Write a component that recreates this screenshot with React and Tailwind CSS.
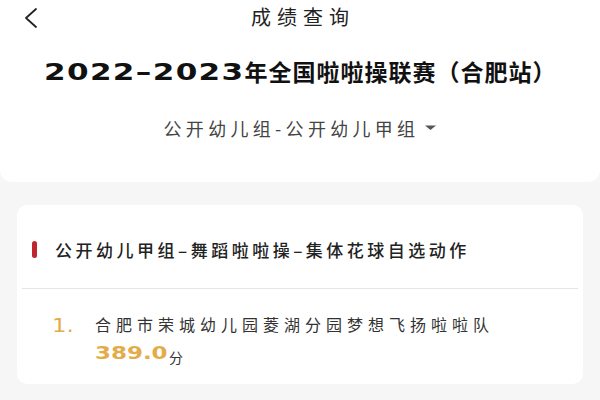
export default function App() {
  const cjk = { fontFamily: '"Noto Sans CJK SC", "Liberation Sans", sans-serif' };
  const num = { fontFamily: '"DejaVu Sans", "Liberation Sans", sans-serif' };

  return (
    <div className="w-[600px] h-[400px] bg-[#f6f6f6] overflow-hidden" style={cjk}>
      {/* Header */}
      <div className="bg-white rounded-b-[12px] h-[182px] flex flex-col">
        <div className="relative h-[36px] flex items-center justify-center">
          <button className="absolute left-[22px] top-[7px]">
            <svg width="18" height="22" viewBox="0 0 18 22" fill="none" stroke="#222" strokeWidth="1.8" strokeLinecap="round" strokeLinejoin="round">
              <path d="M14 2L4 11l10 9" />
            </svg>
          </button>
          <span className="text-[20px] text-[#222] leading-none tracking-[6px] pl-[6px] mt-[-2px]">成绩查询</span>
        </div>
        <div className="mt-[23px] flex justify-center items-center text-[23px] font-bold text-[#111] leading-none">
          {/* wide digits in the source font */}
          <span className="inline-block w-[201px]">
            <span className="inline-block origin-left scale-x-[1.35] tracking-[1px]" style={num}>2022–2023</span>
          </span>
          <span className="tracking-[1px]">年全国啦啦操联赛（合肥站）</span>
        </div>
        <div className="mt-[35px] flex items-center justify-center gap-[6px] text-[18px] text-[#444] leading-none">
          <span className="tracking-[4.3px]">公开幼儿组-公开幼儿甲组</span>
          <svg width="11" height="6" viewBox="0 0 11 6">
            <path d="M0 0.5h11L5.5 5z" fill="#555" />
          </svg>
        </div>
      </div>

      {/* Result card */}
      <div className="mx-[17px] mt-[23px] bg-white rounded-[10px] h-[179px] flex flex-col">
        <div className="h-[83px] pt-[5px] flex items-center gap-[18px] pl-[15px]">
          <span className="w-[5px] h-[17px] rounded-full bg-[#c0262d]" />
          <span className="text-[17px] font-medium text-[#222] leading-none tracking-[3.5px]">
            公开幼儿甲组–舞蹈啦啦操–集体花球自选动作
          </span>
        </div>
        <div className="mx-[5px] h-px bg-[#e6e6e6]" />
        <div className="flex pl-[35px] pt-[27px]">
          <span className="w-[43px] text-[19px] text-[#e3ac4a] leading-none" style={num}>
            <span className="inline-block origin-left scale-x-[1.2]">1.</span>
          </span>
          <div className="flex flex-col">
            <span className="text-[16px] text-[#333] leading-none tracking-[5px]">合肥市荣城幼儿园菱湖分园梦想飞扬啦啦队</span>
            <div className="flex items-end mt-[8px]">
              <span className="inline-block w-[74px]">
                <span className="inline-block origin-left scale-x-[1.35] text-[17px] font-bold text-[#e3ac4a] leading-none" style={num}>
                  389.0
                </span>
              </span>
              <span className="text-[14px] text-[#333] leading-none">分</span>
            </div>
          </div>
        </div>
      </div>
    </div>
  );
}
